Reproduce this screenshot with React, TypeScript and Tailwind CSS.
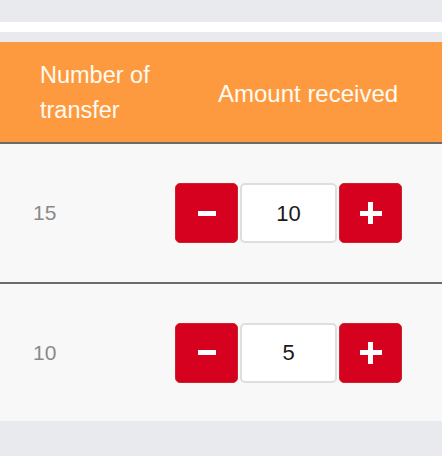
import { useState } from 'react'

type Row = { id: number; transfers: number; amount: number }

function Stepper({ value, onChange }: { value: number; onChange: (v: number) => void }) {
  return (
    <div className="flex items-center gap-[2px]">
      <button
        onClick={() => onChange(Math.max(0, value - 1))}
        className="w-[63px] h-[60px] rounded-[5px] bg-[#d6001f] border border-[#c9252b] flex items-center justify-center"
      >
        <span className="block w-[18px] h-[5px] bg-white" />
      </button>
      <div className="w-[97px] h-[60px] rounded-[5px] bg-white border-2 border-[#dedede] flex items-center justify-center text-[22px] text-[#1a1a1a]">
        {value}
      </div>
      <button
        onClick={() => onChange(value + 1)}
        className="w-[63px] h-[60px] rounded-[5px] bg-[#d6001f] border border-[#c9252b] flex items-center justify-center relative"
      >
        <span className="block w-[22px] h-[5px] bg-white" />
        <span className="absolute w-[5px] h-[22px] bg-white" />
      </button>
    </div>
  )
}

export default function App() {
  const [rows, setRows] = useState<Row[]>([
    { id: 1, transfers: 15, amount: 10 },
    { id: 2, transfers: 10, amount: 5 },
  ])

  const update = (id: number, amount: number) =>
    setRows(rs => rs.map(r => (r.id === id ? { ...r, amount } : r)))

  return (
    <div className="w-[442px] h-[456px] bg-[#e9eaee] font-['Liberation_Sans',Arial,sans-serif] overflow-hidden">
      <div className="h-[22px]" />
      <div className="h-[10px] bg-white" />
      <div className="h-[10px]" />
      <div className="h-[100px] bg-[#fd9a40] text-[#fffbf2] text-[23.5px] flex items-center border-b-2 border-[#6b6b6b] box-content">
        <div className="w-[218px] pl-[40px] leading-[35px] pt-[1px]">
          Number of
          <br />
          transfer
        </div>
        <div className="leading-[35px] pt-[2px] text-[24px]">Amount received</div>
      </div>
      {rows.map((r, i) => (
        <div
          key={r.id}
          className={`bg-[#f8f8f8] flex items-center ${i === 0 ? 'h-[138px] border-b-2 border-[#6b6b6b] box-content' : 'h-[137px]'}`}
        >
          <div className="w-[175px] pl-[33px] text-[21px] text-[#8a8a8a]">{r.transfers}</div>
          <Stepper value={r.amount} onChange={v => update(r.id, v)} />
        </div>
      ))}
    </div>
  )
}
